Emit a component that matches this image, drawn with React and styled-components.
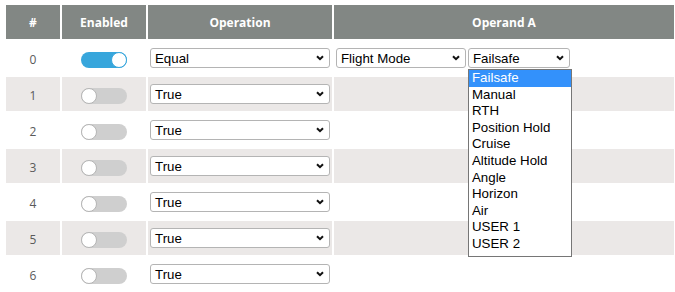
import React from "react";
import styled, { createGlobalStyle } from "styled-components";

const Global = createGlobalStyle`
  html, body { margin: 0; padding: 0; background: #fff; }
  body { font-family: "Open Sans", "Liberation Sans", sans-serif; }
`;

const Page = styled.div`
  padding: 3px 0 0 4px;
  width: 675px;
  height: 292px;
  box-sizing: border-box;
  overflow: hidden;
`;

const Table = styled.table`
  border-collapse: separate;
  border-spacing: 2px;
  width: 672px;
  table-layout: fixed;
`;

const Th = styled.th`
  background: #828784;
  color: #fff;
  font-family: "Open Sans", sans-serif;
  font-weight: 700;
  font-size: 12px;
  height: 34px;
  padding: 0;
  text-align: center;
  vertical-align: middle;
  width: ${(p) => p.$w || "auto"};
`;

const Tr = styled.tr`
  background: ${(p) => (p.$odd ? "#ebe8e7" : "#fff")};
`;

const Td = styled.td`
  height: 34px;
  padding: 0;
  vertical-align: middle;
  text-align: ${(p) => p.$align || "left"};
`;

const Num = styled.span`
  font-family: "Open Sans", sans-serif;
  font-size: 12px;
  color: #5a5a5a;
`;

const Track = styled.div`
  position: relative;
  display: inline-block;
  width: 46px;
  height: 16px;
  border-radius: 8px;
  background: ${(p) => (p.$on ? "#37a6dc" : "#cfcfcf")};
  vertical-align: middle;
`;

const Knob = styled.div`
  position: absolute;
  top: 0;
  ${(p) => (p.$on ? "right: 0;" : "left: 0;")}
  width: 16px;
  height: 16px;
  box-sizing: border-box;
  border-radius: 50%;
  background: #fff;
  border: 1px solid ${(p) => (p.$on ? "#37a6dc" : "#b5b5b5")};
`;

const Selects = styled.div`
  display: flex;
  gap: 2px;
  padding-left: ${(p) => p.$pl || "2px"};
`;

const SelectBox = styled.div`
  position: relative;
  box-sizing: border-box;
  width: ${(p) => p.$w}px;
  height: 20px;
  border: 1px solid #b4b4b4;
  border-radius: 3px;
  background: #fff;
  display: flex;
  align-items: center;
  justify-content: space-between;
  padding: 0 5px 0 4px;
  font-family: "Liberation Sans", Arial, sans-serif;
  font-size: 13.3px;
  color: #000;
`;

const Chevron = () => (
  <svg width="8" height="6" viewBox="0 0 8 6">
    <path d="M1 1.2 L4 4.2 L7 1.2" fill="none" stroke="#111" strokeWidth="2" />
  </svg>
);

const Dropdown = styled.div`
  position: absolute;
  left: -1px;
  top: 20px;
  width: 104px;
  box-sizing: border-box;
  border: 1px solid #767676;
  background: #fff;
  padding: 0 0 3px;
  z-index: 5;
`;

const Option = styled.div`
  height: 16.6px;
  line-height: 16.6px;
  padding-left: 3px;
  font-family: "Liberation Sans", Arial, sans-serif;
  font-size: 13.3px;
  color: ${(p) => (p.$sel ? "#fff" : "#000")};
  background: ${(p) => (p.$sel ? "#3391fb" : "transparent")};
`;

const Select = ({ w, value, children }) => (
  <SelectBox $w={w}>
    <span>{value}</span>
    <Chevron />
    {children}
  </SelectBox>
);

const Toggle = ({ on }) => (
  <Track $on={on}>
    <Knob $on={on} />
  </Track>
);

const modes = [
  "Failsafe",
  "Manual",
  "RTH",
  "Position Hold",
  "Cruise",
  "Altitude Hold",
  "Angle",
  "Horizon",
  "Air",
  "USER 1",
  "USER 2",
];

export default function App() {
  const rows = [0, 1, 2, 3, 4, 5, 6];
  return (
    <Page>
      <Global />
      <Table>
        <thead>
          <tr>
            <Th $w="54px">#</Th>
            <Th $w="84px">Enabled</Th>
            <Th $w="184px">Operation</Th>
            <Th>Operand A</Th>
          </tr>
        </thead>
        <tbody>
          {rows.map((i) => (
            <Tr key={i} $odd={i % 2 === 1}>
              <Td $align="center">
                <Num>{i}</Num>
              </Td>
              <Td $align="center">
                <Toggle on={i === 0} />
              </Td>
              <Td>
                <Selects>
                  <Select w={180} value={i === 0 ? "Equal" : "True"} />
                </Selects>
              </Td>
              <Td>
                {i === 0 && (
                  <Selects>
                    <Select w={130} value="Flight Mode" />
                    <Select w={102} value="Failsafe">
                      <Dropdown>
                        {modes.map((m, k) => (
                          <Option key={m} $sel={k === 0}>
                            {m}
                          </Option>
                        ))}
                      </Dropdown>
                    </Select>
                  </Selects>
                )}
              </Td>
            </Tr>
          ))}
        </tbody>
      </Table>
    </Page>
  );
}
